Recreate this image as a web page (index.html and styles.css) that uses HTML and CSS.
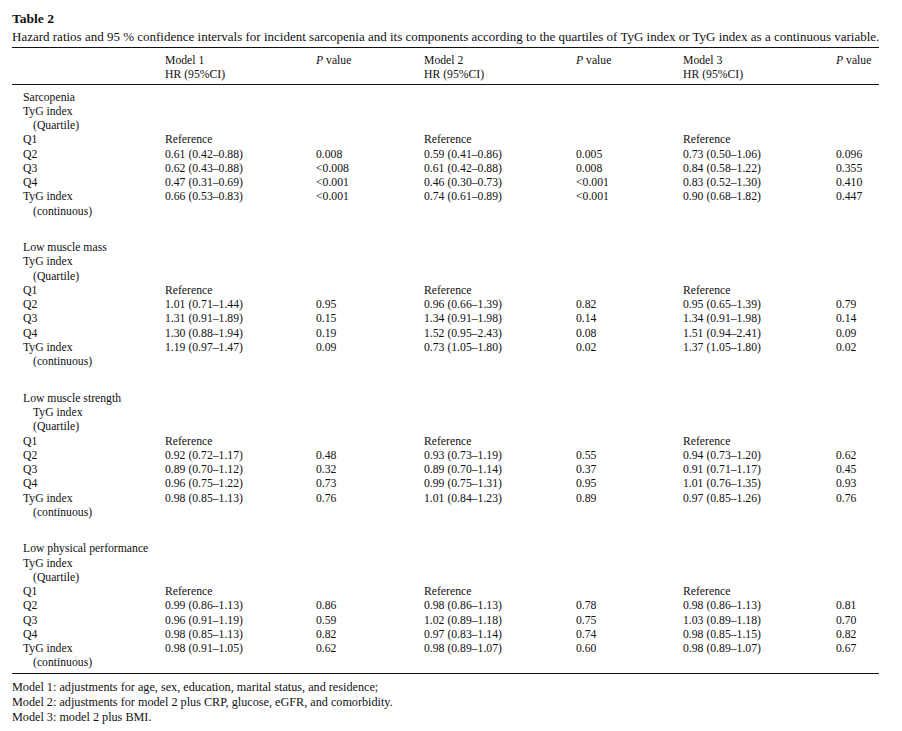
FILE: index.html
```html
<!DOCTYPE html>
<html lang="en">
<head>
<meta charset="utf-8">
<title>Table 2</title>
<link rel="stylesheet" href="styles.css">
</head>
<body>
<div class="page">
  <div class="title">Table 2</div>
  <div class="caption">Hazard ratios and 95 % confidence intervals for incident sarcopenia and its components according to the quartiles of TyG index or TyG index as a continuous variable.</div>
  <table class="tbl">
    <colgroup>
      <col class="c0"><col class="c1"><col class="c2"><col class="c3"><col class="c4"><col class="c5"><col class="c6">
    </colgroup>
    <thead>
      <tr class="first">
        <th></th><th>Model 1</th><th><i>P</i> value</th><th>Model 2</th><th><i>P</i> value</th><th>Model 3</th><th><i>P</i> value</th>
      </tr>
      <tr class="last">
        <th></th><th>HR (95%CI)</th><th></th><th>HR (95%CI)</th><th></th><th>HR (95%CI)</th><th></th>
      </tr>
    </thead>
    <tbody>
      <tr class="first"><td>Sarcopenia</td><td></td><td></td><td></td><td></td><td></td><td></td></tr>
      <tr><td>TyG index</td><td></td><td></td><td></td><td></td><td></td><td></td></tr>
      <tr><td class="ind">(Quartile)</td><td></td><td></td><td></td><td></td><td></td><td></td></tr>
      <tr><td>Q1</td><td>Reference</td><td></td><td>Reference</td><td></td><td>Reference</td><td></td></tr>
      <tr><td>Q2</td><td>0.61 (0.42–0.88)</td><td>0.008</td><td>0.59 (0.41–0.86)</td><td>0.005</td><td>0.73 (0.50–1.06)</td><td>0.096</td></tr>
      <tr><td>Q3</td><td>0.62 (0.43–0.88)</td><td>&lt;0.008</td><td>0.61 (0.42–0.88)</td><td>0.008</td><td>0.84 (0.58–1.22)</td><td>0.355</td></tr>
      <tr><td>Q4</td><td>0.47 (0.31–0.69)</td><td>&lt;0.001</td><td>0.46 (0.30–0.73)</td><td>&lt;0.001</td><td>0.83 (0.52–1.30)</td><td>0.410</td></tr>
      <tr><td>TyG index</td><td>0.66 (0.53–0.83)</td><td>&lt;0.001</td><td>0.74 (0.61–0.89)</td><td>&lt;0.001</td><td>0.90 (0.68–1.82)</td><td>0.447</td></tr>
      <tr><td class="ind">(continuous)</td><td></td><td></td><td></td><td></td><td></td><td></td></tr>
      <tr class="gap"><td colspan="7"></td></tr>

      <tr><td>Low muscle mass</td><td></td><td></td><td></td><td></td><td></td><td></td></tr>
      <tr><td>TyG index</td><td></td><td></td><td></td><td></td><td></td><td></td></tr>
      <tr><td class="ind">(Quartile)</td><td></td><td></td><td></td><td></td><td></td><td></td></tr>
      <tr><td>Q1</td><td>Reference</td><td></td><td>Reference</td><td></td><td>Reference</td><td></td></tr>
      <tr><td>Q2</td><td>1.01 (0.71–1.44)</td><td>0.95</td><td>0.96 (0.66–1.39)</td><td>0.82</td><td>0.95 (0.65–1.39)</td><td>0.79</td></tr>
      <tr><td>Q3</td><td>1.31 (0.91–1.89)</td><td>0.15</td><td>1.34 (0.91–1.98)</td><td>0.14</td><td>1.34 (0.91–1.98)</td><td>0.14</td></tr>
      <tr><td>Q4</td><td>1.30 (0.88–1.94)</td><td>0.19</td><td>1.52 (0.95–2.43)</td><td>0.08</td><td>1.51 (0.94–2.41)</td><td>0.09</td></tr>
      <tr><td>TyG index</td><td>1.19 (0.97–1.47)</td><td>0.09</td><td>0.73 (1.05–1.80)</td><td>0.02</td><td>1.37 (1.05–1.80)</td><td>0.02</td></tr>
      <tr><td class="ind">(continuous)</td><td></td><td></td><td></td><td></td><td></td><td></td></tr>
      <tr class="gap"><td colspan="7"></td></tr>

      <tr><td>Low muscle strength</td><td></td><td></td><td></td><td></td><td></td><td></td></tr>
      <tr><td class="ind">TyG index</td><td></td><td></td><td></td><td></td><td></td><td></td></tr>
      <tr><td class="ind">(Quartile)</td><td></td><td></td><td></td><td></td><td></td><td></td></tr>
      <tr><td>Q1</td><td>Reference</td><td></td><td>Reference</td><td></td><td>Reference</td><td></td></tr>
      <tr><td>Q2</td><td>0.92 (0.72–1.17)</td><td>0.48</td><td>0.93 (0.73–1.19)</td><td>0.55</td><td>0.94 (0.73–1.20)</td><td>0.62</td></tr>
      <tr><td>Q3</td><td>0.89 (0.70–1.12)</td><td>0.32</td><td>0.89 (0.70–1.14)</td><td>0.37</td><td>0.91 (0.71–1.17)</td><td>0.45</td></tr>
      <tr><td>Q4</td><td>0.96 (0.75–1.22)</td><td>0.73</td><td>0.99 (0.75–1.31)</td><td>0.95</td><td>1.01 (0.76–1.35)</td><td>0.93</td></tr>
      <tr><td>TyG index</td><td>0.98 (0.85–1.13)</td><td>0.76</td><td>1.01 (0.84–1.23)</td><td>0.89</td><td>0.97 (0.85–1.26)</td><td>0.76</td></tr>
      <tr><td class="ind">(continuous)</td><td></td><td></td><td></td><td></td><td></td><td></td></tr>
      <tr class="gap"><td colspan="7"></td></tr>

      <tr><td>Low physical performance</td><td></td><td></td><td></td><td></td><td></td><td></td></tr>
      <tr><td>TyG index</td><td></td><td></td><td></td><td></td><td></td><td></td></tr>
      <tr><td class="ind">(Quartile)</td><td></td><td></td><td></td><td></td><td></td><td></td></tr>
      <tr><td>Q1</td><td>Reference</td><td></td><td>Reference</td><td></td><td>Reference</td><td></td></tr>
      <tr><td>Q2</td><td>0.99 (0.86–1.13)</td><td>0.86</td><td>0.98 (0.86–1.13)</td><td>0.78</td><td>0.98 (0.86–1.13)</td><td>0.81</td></tr>
      <tr><td>Q3</td><td>0.96 (0.91–1.19)</td><td>0.59</td><td>1.02 (0.89–1.18)</td><td>0.75</td><td>1.03 (0.89–1.18)</td><td>0.70</td></tr>
      <tr><td>Q4</td><td>0.98 (0.85–1.13)</td><td>0.82</td><td>0.97 (0.83–1.14)</td><td>0.74</td><td>0.98 (0.85–1.15)</td><td>0.82</td></tr>
      <tr><td>TyG index</td><td>0.98 (0.91–1.05)</td><td>0.62</td><td>0.98 (0.89–1.07)</td><td>0.60</td><td>0.98 (0.89–1.07)</td><td>0.67</td></tr>
      <tr class="last"><td class="ind">(continuous)</td><td></td><td></td><td></td><td></td><td></td><td></td></tr>
    </tbody>
  </table>
  <div class="notes">
    <p>Model 1: adjustments for age, sex, education, marital status, and residence;</p>
    <p>Model 2: adjustments for model 2 plus CRP, glucose, eGFR, and comorbidity.</p>
    <p>Model 3: model 2 plus BMI.</p>
  </div>
</div>
</body>
</html>
```

FILE: styles.css
```css
html, body {
  margin: 0;
  padding: 0;
  background: #ffffff;
}

.page {
  width: 867px;
  margin-left: 12px;
  padding-top: 9px;
  font-family: "Liberation Serif", "Times New Roman", serif;
  color: #111111;
}

.title {
  font-weight: bold;
  font-size: 13.5px;
  line-height: 19px;
}

.caption {
  font-size: 13px;
  line-height: 17px;
  white-space: nowrap;
  margin-bottom: 2px;
}

.tbl {
  width: 867px;
  border-collapse: collapse;
  table-layout: fixed;
  font-size: 11.7px;
  border-top: 1px solid #111;
  border-bottom: 1px solid #111;
}

.c0 { width: 153px; }
.c1 { width: 151px; }
.c2 { width: 108px; }
.c3 { width: 152px; }
.c4 { width: 107px; }
.c5 { width: 153px; }
.c6 { width: 43px; }

.tbl th,
.tbl td {
  padding: 0;
  text-align: left;
  font-weight: normal;
  line-height: 14.25px;
  height: 14.25px;
  white-space: nowrap;
  vertical-align: middle;
}

.tbl th:first-child,
.tbl td:first-child {
  padding-left: 11px;
}

.tbl td.ind {
  padding-left: 21px;
}

.tbl thead {
  border-bottom: 1px solid #111;
}

.tbl thead tr.first th { padding-top: 6px; }
.tbl thead tr.last th { padding-bottom: 1px; }
.tbl tbody tr.first td { padding-top: 6px; }
.tbl tbody tr.last td { padding-bottom: 2px; }

.tbl tr.gap td {
  height: 22.4px;
  line-height: 0;
  padding: 0;
}

.notes {
  margin-top: 6px;
  font-size: 12.2px;
  line-height: 15px;
}

.notes p {
  margin: 0;
}
```
